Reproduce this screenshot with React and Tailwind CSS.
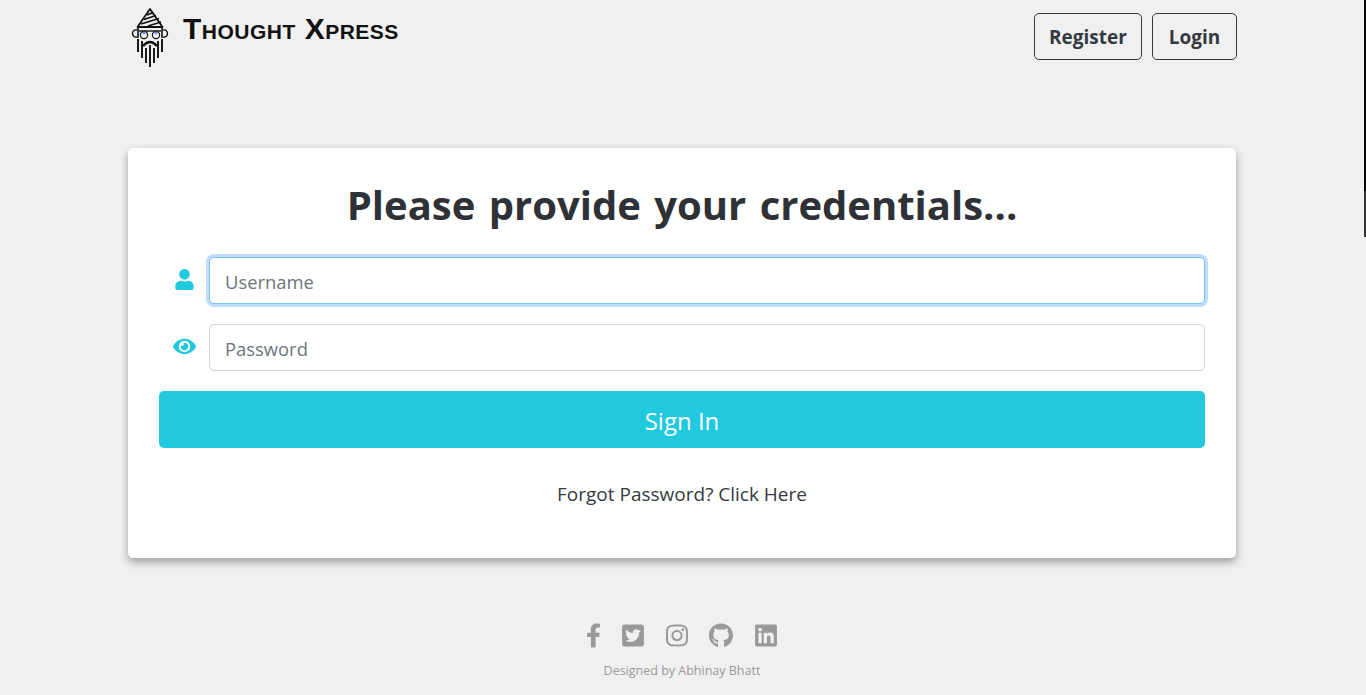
import React from 'react';
import { FaUser, FaEye, FaFacebookF, FaTwitterSquare, FaInstagram, FaGithub, FaLinkedin } from 'react-icons/fa';

const Logo = () => (
    <svg width="38" height="60" viewBox="0 0 38 60" className="shrink-0" fill="none" stroke="#111" strokeWidth="1.5">
        {/* hat */}
        <path d="M19 1 L31.5 19 H6.5 Z" strokeWidth="1.8" strokeLinejoin="round" />
        <path d="M16 7 L22 4.5 M13 11.5 L25 7.5 M10 16 L28 10.5 M17 18 L30 14" strokeWidth="1.8" />
        {/* head and ears */}
        <path d="M7 19 V30 M31 19 V30" strokeWidth="1.6" />
        <path d="M6 22 C0 21 0 30 6 29 M32 22 C38 21 38 30 32 29" strokeWidth="1.4" />
        {/* glasses */}
        <path d="M8 23 H30" strokeWidth="1.4" />
        <circle cx="13" cy="27" r="3.6" strokeWidth="1.2" />
        <circle cx="25" cy="27" r="3.6" strokeWidth="1.2" />
        <circle cx="13" cy="25" r="1.4" fill="#5b8fe8" stroke="none" />
        <circle cx="25" cy="25" r="1.4" fill="#5b8fe8" stroke="none" />
        {/* moustache and beard */}
        <path d="M12 38 Q19 30 26 38" strokeWidth="2.4" />
        <path d="M7 31 V44 M11 33 V50 M15 40 V55 M19 37 V59 M23 40 V55 M27 33 V50 M31 31 V44" strokeWidth="1.9" />
    </svg>
);

const Field = ({ icon, placeholder, focused }) => (
    <div className="flex items-center">
        <div className="w-[50px] flex justify-center text-[#20c9dd] pb-[3px]">{icon}</div>
        <input
            placeholder={placeholder}
            className={`flex-1 h-[47px] rounded-[5px] bg-white px-[15px] pt-[2px] text-[18.4px] text-[#495057] placeholder:text-[#6c757d] outline-none border ${focused ? 'border-[#80bdff] shadow-[0_0_0_3px_#bfdeff]' : 'border-[#ced4da]'}`}
        />
    </div>
);

const App = () => {
    return (
        <div className="h-[695px] overflow-hidden bg-[#f0f0f0] flex font-['Open_Sans','Noto_Sans',sans-serif] text-[#343a40]">
            <div className="w-[1364px] flex flex-col items-center">
                <div className="w-[1108px]">
                    <header className="h-[148px] flex items-start justify-between">
                        <div className="flex items-start pl-[3px] pt-[8px]">
                            <Logo />
                            <span className="ml-[14px] mt-[3px] font-['Liberation_Sans',sans-serif] font-bold [font-variant:small-caps] text-[30px] leading-[36px] text-[#111] tracking-[0.5px] whitespace-nowrap">
                                Thought Xpress
                            </span>
                        </div>
                        <div className="flex gap-[10px] pt-[13px]">
                            <button className="w-[108px] h-[47px] pt-[2px] rounded-[5px] border border-[#343a40] text-[19px] font-bold">Register</button>
                            <button className="w-[85px] h-[47px] pt-[2px] rounded-[5px] border border-[#343a40] text-[19px] font-bold mr-[-1px]">Login</button>
                        </div>
                    </header>

                    <main className="h-[410px] bg-white rounded-[5px] shadow-[0_4px_8px_rgba(0,0,0,0.35)] px-[31px] pt-[27px]">
                        <h1 className="text-center font-bold text-[40px] leading-[60px] [word-spacing:3px] text-[#2e3136]">
                            Please provide your credentials...
                        </h1>
                        <form className="mt-[22px] flex flex-col gap-[20px]" onSubmit={e => e.preventDefault()}>
                            <Field icon={<FaUser size={21} />} placeholder="Username" focused />
                            <Field icon={<FaEye size={23} />} placeholder="Password" />
                            <button className="h-[57px] pt-[2px] rounded-[5px] bg-[#20c9dd] text-white text-[24px]">Sign In</button>
                        </form>
                        <p className="mt-[32px] text-center text-[19px] leading-[29px]">Forgot Password? Click Here</p>
                    </main>

                    <footer className="pt-[64px] flex flex-col items-center text-[#999]">
                        <div className="flex items-center gap-[21.5px] h-[26px] pr-[2px]">
                            <FaFacebookF className="w-[15px] h-[25px]" />
                            <FaTwitterSquare className="w-[22px] h-[25px]" />
                            <FaInstagram className="w-[22px] h-[25px]" />
                            <FaGithub className="w-[24px] h-[25px]" />
                            <FaLinkedin className="w-[22px] h-[25px]" />
                        </div>
                        <p className="mt-[13px] text-[12.5px] leading-[19px] text-[#9a9a9a]">Designed by Abhinay Bhatt</p>
                    </footer>
                </div>
            </div>
            <div className="w-[2px] flex flex-col">
                <div className="h-[191px] bg-black" />
                <div className="h-[46px] bg-[#333]" />
            </div>
        </div>
    );
};

export default App;
